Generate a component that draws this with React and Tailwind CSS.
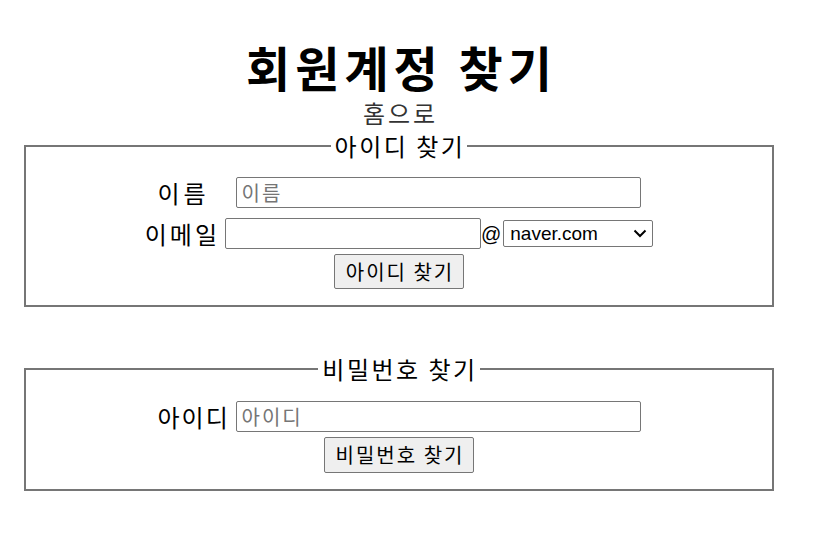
const kr = "font-['Noto_Sans_CJK_KR','Noto_Sans',sans-serif]";

export default function App() {
  return (
    <div className={`min-h-[534px] w-[820px] bg-white text-black ${kr}`}>
      <div className="ml-[24px] w-[750px] pt-[38px]">
        <h1 className="pl-[5px] text-center text-[48px] font-bold leading-[56px] tracking-[5px]">회원계정 찾기</h1>
        <div className="mt-[6px] pl-[3px] text-center text-[24px] leading-[26px] tracking-[3px] text-[#333]">홈으로</div>

        <fieldset className="mt-[7px] border-2 border-[#767676] px-3 pb-[16px] pt-[18px]">
          <legend className="mx-auto pl-[4px] pr-[2px] text-[24px] leading-[26px] tracking-[2.5px]">아이디 찾기</legend>
          <div className="flex flex-col items-center">
            <div className="flex h-[31px] items-center gap-[8px] text-[24px]">
              <span className="w-[70px] whitespace-nowrap tracking-[4px]">이름</span>
              <input
                placeholder="이름"
                className="h-[31px] w-[405px] rounded-[2px] border border-[#767676] px-[5px] text-[20px] tracking-[2px] placeholder:text-[#757575]"
              />
            </div>
            <div className="mt-[10px] flex h-[31px] items-center text-[24px]">
              <span className="mr-[5px] whitespace-nowrap tracking-[3px]">이메일</span>
              <input className="h-[31px] w-[256px] rounded-[2px] border border-[#767676] px-[5px] text-[20px]" />
              <span className="mr-[2px] font-['Liberation_Sans',Arial,sans-serif] text-[20px]">@</span>
              <div className="relative">
                <select className="block h-[27px] w-[150px] appearance-none rounded-[2px] border border-[#767676] bg-white pl-[6px] font-['Liberation_Sans',Arial,sans-serif] text-[19px] leading-[25px]">
                  <option>naver.com</option>
                  <option>gmail.com</option>
                  <option>daum.net</option>
                </select>
                <svg
                  width="14"
                  height="9"
                  viewBox="0 0 14 9"
                  className="pointer-events-none absolute right-[6px] top-[9px]"
                >
                  <polyline points="1.5,1.5 7,7 12.5,1.5" fill="none" stroke="#000" strokeWidth="2" />
                </svg>
              </div>
            </div>
            <button className="mt-[5px] h-[35px] w-[130px] rounded-[2px] border border-[#767676] bg-[#efefef] pl-[2px] text-[20px] leading-none tracking-[2px]">
              아이디 찾기
            </button>
          </div>
        </fieldset>

        <fieldset className="mt-[49px] border-2 border-[#767676] px-3 pb-[16px] pt-[19px]">
          <legend className="mx-auto pl-[4px] pr-[2px] text-[24px] leading-[26px] tracking-[2.5px]">비밀번호 찾기</legend>
          <div className="flex flex-col items-center">
            <div className="flex h-[31px] items-center gap-[8px] text-[24px]">
              <span className="w-[70px] whitespace-nowrap tracking-[2px]">아이디</span>
              <input
                placeholder="아이디"
                className="h-[31px] w-[405px] rounded-[2px] border border-[#767676] px-[5px] text-[20px] tracking-[2px] placeholder:text-[#757575]"
              />
            </div>
            <button className="mt-[5px] h-[36px] w-[150px] rounded-[2px] border border-[#767676] bg-[#efefef] pl-[2px] text-[20px] leading-none tracking-[2px]">
              비밀번호 찾기
            </button>
          </div>
        </fieldset>
      </div>
    </div>
  );
}
